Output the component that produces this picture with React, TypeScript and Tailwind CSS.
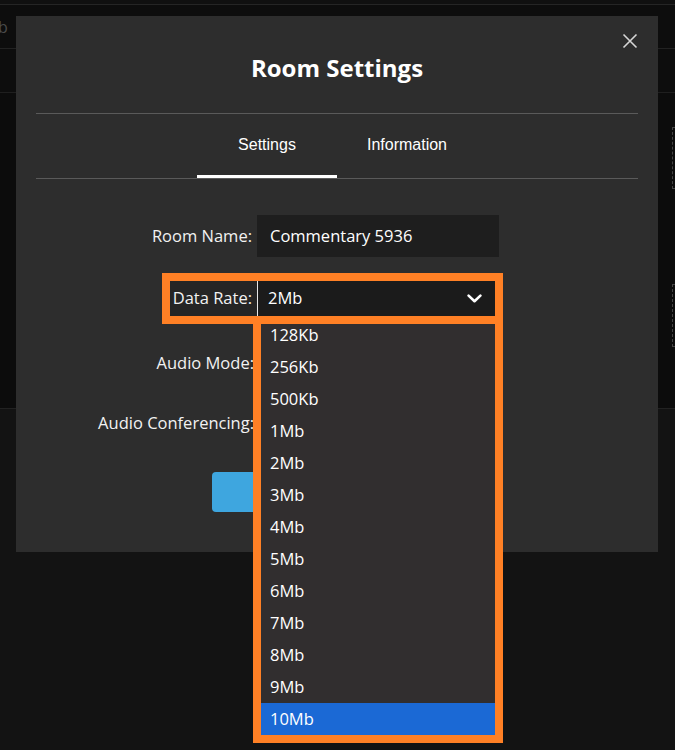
import React from 'react';

const rates = ['128Kb', '256Kb', '500Kb', '1Mb', '2Mb', '3Mb', '4Mb', '5Mb', '6Mb', '7Mb', '8Mb', '9Mb', '10Mb'];

function CloseIcon() {
    return (
        <svg width="16" height="16" viewBox="0 0 16 16" fill="none" stroke="#d6d6d6" strokeWidth="1.6">
            <path d="M1.5 1.5 14.5 14.5M14.5 1.5 1.5 14.5" />
        </svg>
    );
}

function Chevron() {
    return (
        <svg width="15" height="9" viewBox="0 0 15 9" fill="none" stroke="#ffffff" strokeWidth="2.6" strokeLinecap="round" strokeLinejoin="round">
            <path d="M1.6 1.6 7.5 7.2 13.4 1.6" />
        </svg>
    );
}

export default function App() {
    const sans = { fontFamily: '"Open Sans", "Noto Sans", sans-serif' };

    return (
        <div className="relative w-full h-[750px] overflow-hidden bg-[#131313] flex flex-col" style={sans}>
            {/* background app behind the modal */}
            <div className="h-[4px] bg-[#101010]" />
            <div className="h-[44px] border-t border-[#252525] bg-[#0d0d0d] flex items-center">
                <span className="-ml-[2px] text-[16px] text-[#4a4a4a]">b</span>
            </div>
            <div className="h-[44px] border-t border-[#222222] bg-[#0d0d0d]" />
            <div className="h-[316px] border-t border-[#1f1f1f] bg-[#0c0c0c] overflow-hidden">
                <div className="ml-[672px] mt-[34px] h-[62px] w-[20px] border border-dashed border-[#444444]" />
                <div className="ml-[672px] mt-[95px] h-[63px] w-[20px] border border-dashed border-[#444444]" />
            </div>
            <div className="flex-1 border-t border-[#222222] bg-[#131313]" />

            {/* modal */}
            <div className="absolute left-[16px] top-[16px] w-[642px] h-[536px] bg-[#2d2d2d] flex flex-col">
                <button className="absolute right-[20px] top-[17px]">
                    <CloseIcon />
                </button>
                <h1 className="pt-[36px] text-center text-[24px] leading-[32px] font-bold text-white">Room Settings</h1>
                <div className="mt-[29px] mx-[20px] h-px bg-[#5a5a5a]" />
                <div className="flex justify-center" style={{ fontFamily: '"Liberation Sans", Arial, sans-serif' }}>
                    <div className="w-[140px] h-[64px] flex items-center justify-center border-b-[3px] border-white text-[16px] text-white">Settings</div>
                    <div className="w-[140px] h-[64px] flex items-center justify-center border-b-[3px] border-transparent text-[16px] text-white">Information</div>
                </div>
                <div className="mx-[20px] h-px bg-[#5a5a5a]" />

                <div className="pl-[64px] flex flex-col text-[16.5px] text-[#f2f2f2]">
                    <div className="mt-[36px] flex items-center h-[42px]">
                        <label className="w-[172px] text-right">Room Name:</label>
                        <div className="ml-[5px] w-[242px] h-[42px] bg-[#1e1e1e] flex items-center px-[13px] text-white">Commentary 5936</div>
                    </div>

                    <div className="mt-[24px] ml-[90px] w-[325px] h-[35px] flex items-center bg-[#252525] outline-8 outline-[#ff8025]">
                        <label className="w-[82px] text-right">Data Rate:</label>
                        <div className="ml-[5px] flex-1 h-[35px] bg-[#1b1b1b] border-l border-[#e6e6e6] flex items-center justify-between pl-[10px] pr-[13px] text-white">
                            <span>2Mb</span>
                            <Chevron />
                        </div>
                    </div>

                    <div className="mt-[26px] flex items-center h-[42px]">
                        <label className="w-[174px] text-right">Audio Mode:</label>
                        <div className="ml-[3px] w-[242px] h-[42px] bg-[#1e1e1e]" />
                    </div>
                    <div className="mt-[18px] flex items-center h-[42px]">
                        <label className="w-[174px] text-right">Audio Conferencing:</label>
                        <div className="ml-[3px] w-[242px] h-[42px] bg-[#1e1e1e]" />
                    </div>
                </div>

                <div className="mt-[28px] flex justify-center">
                    <button className="w-[250px] h-[40px] rounded-[4px] bg-[#3ea6df]" />
                </div>
            </div>

            {/* open dropdown list */}
            <div className="absolute left-[253px] top-[316px] w-[250px] h-[427px] border-8 border-[#ff8025] bg-[#312e2f] overflow-hidden">
                <ul className="-mt-[5px] text-[16.5px] text-white">
                    {rates.map((r) => (
                        <li key={r} className={`h-[32px] flex items-center pl-[9px] ${r === '10Mb' ? 'bg-[#1b69d5]' : ''}`}>
                            {r}
                        </li>
                    ))}
                </ul>
            </div>
        </div>
    );
}
